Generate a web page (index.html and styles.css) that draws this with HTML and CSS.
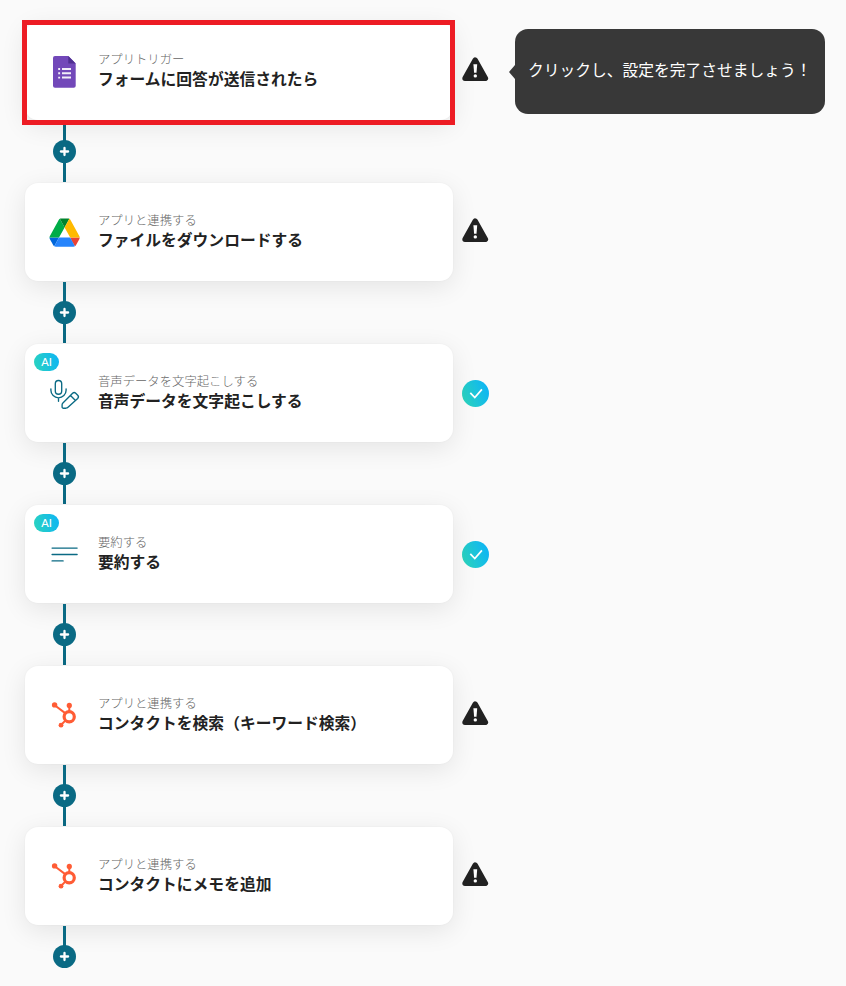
FILE: index.html
```html
<!DOCTYPE html>
<html lang="ja">
<head>
<meta charset="utf-8">
<title>フローボット</title>
<link rel="stylesheet" href="styles.css">
</head>
<body>
<svg class="defs" width="0" height="0" aria-hidden="true">
  <defs>
    <linearGradient id="aqua" x1="0" y1="0.7" x2="1" y2="0.3">
      <stop offset="0" stop-color="#2bd4bd"/>
      <stop offset="1" stop-color="#0db4f6"/>
    </linearGradient>
    <symbol id="warning" viewBox="0 0 27 25">
      <path d="M13.2 3 23.4 21.3H3z" fill="#222" stroke="#222" stroke-width="5.4" stroke-linejoin="round"/>
      <path d="M11.4 7.2h3.8l-.7 8.6h-2.4z" fill="#fff"/>
      <circle cx="13.3" cy="18.9" r="1.7" fill="#fff"/>
    </symbol>
    <symbol id="done" viewBox="0 0 27 27">
      <circle cx="13.5" cy="13.5" r="13.5" fill="url(#aqua)"/>
      <path d="M8.3 12.8l4.5 4.8 7.1-8.2" fill="none" stroke="#fff" stroke-width="1.7"/>
    </symbol>
    <symbol id="plus" viewBox="0 0 23 23">
      <circle cx="11.5" cy="11.5" r="11.5" fill="#0a6a84"/>
      <path d="M11.5 7.9v7.2M7.9 11.5h7.2" stroke="#fff" stroke-width="2.3" stroke-linecap="round"/>
    </symbol>
    <symbol id="hub" viewBox="0 0 32 34">
      <path d="M5.7 5.2 16.5 13.4M20.3 5.5v6M16.3 20.6 12 25" fill="none" stroke="#ff5c35" stroke-width="2"/>
      <circle cx="20.2" cy="16.8" r="5.1" fill="none" stroke="#ff5c35" stroke-width="3.2"/>
      <g fill="#ff5c35"><circle cx="5.6" cy="4.9" r="2.7"/><circle cx="20.3" cy="5.4" r="2.6"/><circle cx="12" cy="25.2" r="2.4"/></g>
    </symbol>
  </defs>
</svg>

<main class="flow">
  <section class="step">
    <div class="card selected">
      <svg class="icon" viewBox="0 0 32 34">
        <path d="M6 0h13.3l7.4 7.4v22.3a2 2 0 0 1-2 2H6a2 2 0 0 1-2-2V2a2 2 0 0 1 2-2z" fill="#7248b9"/>
        <path d="M19.3 0l7.4 7.4h-7.4z" fill="#4f2f91"/>
        <path d="M13 13h9M13 17.3h9M13 21.6h9" stroke="#f1eef8" stroke-width="2"/>
        <path d="M9.2 13h1.9M9.2 17.3h1.9M9.2 21.6h1.9" stroke="#f1eef8" stroke-width="1.9"/>
      </svg>
      <div class="text"><p class="label">アプリトリガー</p><h2 class="title">フォームに回答が送信されたら</h2></div>
    </div>
    <svg class="status warn"><use href="#warning"/></svg>
    <div class="tooltip">クリックし、設定を完了させましょう！</div>
  </section>
  <div class="connector"><svg><use href="#plus"/></svg></div>

  <section class="step">
    <div class="card">
      <svg class="icon" viewBox="0 0 32 34">
        <g transform="translate(.5 1.4) scale(.346 .362)">
          <path d="M6.6 66.85l3.85 6.65c.8 1.4 1.95 2.5 3.3 3.3L27.5 53H0c0 1.55.4 3.1 1.2 4.5z" fill="#0066da"/>
          <path d="M43.65 25L29.9 1.2c-1.35.8-2.5 1.9-3.3 3.3l-25.4 44A9 9 0 0 0 0 53h27.5z" fill="#00ac47"/>
          <path d="M73.55 76.8c1.35-.8 2.5-1.9 3.3-3.3l1.6-2.75L86.1 57.5c.8-1.4 1.2-2.95 1.2-4.5H59.8l5.85 11.5z" fill="#ea4335"/>
          <path d="M43.65 25L57.4 1.2C56.05.4 54.5 0 52.9 0H34.4c-1.6 0-3.15.45-4.5 1.2z" fill="#00832d"/>
          <path d="M59.8 53H27.5L13.75 76.8c1.35.8 2.9 1.2 4.5 1.2h50.8c1.6 0 3.15-.45 4.5-1.2z" fill="#2684fc"/>
          <path d="M73.4 26.5L60.7 4.5c-.8-1.4-1.95-2.5-3.3-3.3L43.65 25 59.8 53h27.45c0-1.55-.4-3.1-1.2-4.5z" fill="#ffba00"/>
        </g>
      </svg>
      <div class="text"><p class="label">アプリと連携する</p><h2 class="title">ファイルをダウンロードする</h2></div>
    </div>
    <svg class="status warn"><use href="#warning"/></svg>
  </section>
  <div class="connector"><svg><use href="#plus"/></svg></div>

  <section class="step">
    <div class="card">
      <span class="badge">AI</span>
      <svg class="icon" viewBox="0 0 32 34">
        <g fill="none" stroke="#0a6a84" stroke-width="1.35" stroke-linecap="round" stroke-linejoin="round">
          <rect x="6.3" y="2.5" width="6.4" height="13.7" rx="3.2"/>
          <path d="M1.9 10.8v1.4a7.6 7.6 0 0 0 15.2 0v-1.4M9.5 20v3.3"/>
          <path d="M13.9 24.9 23.6 15.3a2.2 2.2 0 0 1 3.1 0l2 2a2.2 2.2 0 0 1 0 3.1L19 29.3a3 3 0 0 1-2 .9h-2.6a1.3 1.3 0 0 1-1.3-1.3v-2.2a2.6 2.6 0 0 1 .8-1.8zM21.5 17.5l4.7 4.7"/>
        </g>
      </svg>
      <div class="text"><p class="label">音声データを文字起こしする</p><h2 class="title">音声データを文字起こしする</h2></div>
    </div>
    <svg class="status"><use href="#done"/></svg>
  </section>
  <div class="connector"><svg><use href="#plus"/></svg></div>

  <section class="step">
    <div class="card">
      <span class="badge">AI</span>
      <svg class="icon" viewBox="0 0 32 34">
        <path d="M3.1 9.1h25M3.1 15.5h25M3.1 21.9h11" stroke="#0a6a84" stroke-width="1.4" stroke-linecap="round"/>
      </svg>
      <div class="text"><p class="label">要約する</p><h2 class="title">要約する</h2></div>
    </div>
    <svg class="status"><use href="#done"/></svg>
  </section>
  <div class="connector"><svg><use href="#plus"/></svg></div>

  <section class="step">
    <div class="card">
      <svg class="icon"><use href="#hub"/></svg>
      <div class="text"><p class="label">アプリと連携する</p><h2 class="title">コンタクトを検索（キーワード検索）</h2></div>
    </div>
    <svg class="status warn"><use href="#warning"/></svg>
  </section>
  <div class="connector"><svg><use href="#plus"/></svg></div>

  <section class="step">
    <div class="card">
      <svg class="icon"><use href="#hub"/></svg>
      <div class="text"><p class="label">アプリと連携する</p><h2 class="title">コンタクトにメモを追加</h2></div>
    </div>
    <svg class="status warn"><use href="#warning"/></svg>
  </section>
  <div class="connector last"><svg><use href="#plus"/></svg></div>
</main>
</body>
</html>
```
FILE: styles.css
```css
* { box-sizing: border-box; }

body {
  margin: 0;
  background: #fafafa;
  color: #222;
  font-family: "Noto Sans CJK JP", sans-serif;
}

.defs { position: absolute; }

.flow {
  height: 986px;
  padding: 22px 0 0 25px;
  overflow: hidden;
}

.step {
  display: flex;
  align-items: flex-start;
  height: 98px;
}

.card {
  position: relative;
  display: flex;
  align-items: flex-start;
  width: 428px;
  height: 98px;
  padding: 28px 24px;
  border-radius: 13px;
  background: #fff;
  box-shadow: 0 0 2px rgba(0, 0, 0, .05), 0 6px 26px rgba(0, 0, 0, .09);
}

.selected { z-index: 1; }

.selected::after {
  content: "";
  position: absolute;
  inset: -2px -2px -5px -3px;
  border: 5px solid #ed1c24;
}

.icon {
  flex: none;
  width: 32px;
  height: 34px;
  margin-top: 6px;
}

.text { margin-left: 17px; }

.label {
  margin: 0;
  color: #666;
  font-size: 12.35px;
  font-weight: 300;
  line-height: 18px;
  white-space: nowrap;
}

.title {
  margin: 0;
  font-size: 15.78px;
  font-weight: 700;
  line-height: 22px;
  white-space: nowrap;
}

.badge {
  position: absolute;
  top: 9px;
  left: 9px;
  width: 25px;
  height: 18px;
  border-radius: 9px;
  background: linear-gradient(75deg, #2bd4bd, #0db4f6);
  color: #fff;
  font: 500 11px/18px Lato, sans-serif;
  text-align: center;
}

.status {
  flex: none;
  width: 27px;
  height: 27px;
  margin: 36px 0 0 9px;
}

.warn {
  height: 25px;
  margin-top: 35px;
}

.tooltip {
  position: relative;
  display: flex;
  align-items: center;
  width: 310px;
  height: 85px;
  margin: 7px 0 0 26px;
  padding: 0 13px 5px;
  border-radius: 13px;
  background: #383838;
  color: #fff;
  font-size: 15.75px;
  white-space: nowrap;
}

.tooltip::before {
  content: "";
  position: absolute;
  left: -6px;
  top: 36px;
  border: solid transparent;
  border-width: 7px 6px 7px 0;
  border-right-color: #383838;
}

.connector {
  position: relative;
  display: flex;
  justify-content: center;
  width: 23px;
  height: 63px;
  margin-left: 28px;
  padding-top: 20px;
  background: linear-gradient(#0a6a84, #0a6a84) 10px 1px / 3px 61px no-repeat;
}

.connector svg {
  width: 23px;
  height: 23px;
}

.last { background-size: 3px 30px; }
```
